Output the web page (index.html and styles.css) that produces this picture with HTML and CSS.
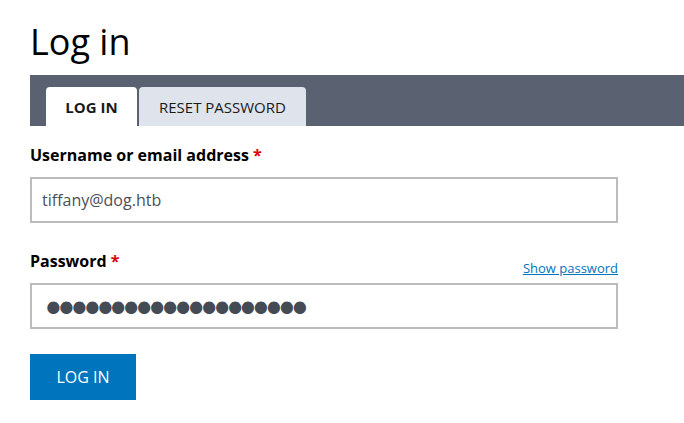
FILE: index.html
```html
<!DOCTYPE html>
<html>
<head>
<meta charset="utf-8">
<link rel="stylesheet" href="styles.css">
</head>
<body>
<main class="page">
  <h1 class="title">Log in</h1>
  <nav class="tabs">
    <a class="tab tab-active">LOG IN</a>
    <a class="tab">RESET PASSWORD</a>
  </nav>
  <form class="form">
    <div class="field">
      <label class="label">Username or email address <span class="req">*</span></label>
      <input class="input" type="text" value="tiffany@dog.htb">
    </div>
    <div class="field field-pass">
      <div class="label-row">
        <label class="label">Password <span class="req">*</span></label>
        <a class="show" href="#">Show password</a>
      </div>
      <input class="input input-pass" type="password" value="abcdefghijklmnopqrst">
    </div>
    <button class="btn" type="button">LOG IN</button>
  </form>
</main>
</body>
</html>
```

FILE: styles.css
```css
html, body {
  margin: 0;
  padding: 0;
  background: #fff;
}
body {
  font-family: "Open Sans", "Noto Sans", sans-serif;
  color: #000;
}
.page {
  padding: 16px 0 0 30px;
}
.title {
  margin: 0;
  font-size: 36px;
  font-weight: 400;
  line-height: 52px;
  height: 59px;
}
.tabs {
  display: flex;
  gap: 2px;
  background: #5a6271;
  height: 51px;
  padding: 12px 0 0 16px;
  box-sizing: border-box;
  align-items: flex-end;
}
.tab {
  display: flex;
  align-items: center;
  justify-content: center;
  height: 39px;
  padding: 0 20px;
  background: #dfe3ec;
  border-radius: 4px 4px 0 0;
  font-size: 15px;
  color: #1a1a1a;
  box-sizing: border-box;
}
.tab-active {
  background: #fff;
  font-weight: 700;
  width: 91px;
  padding: 0;
}
.form {
  width: 588px;
  padding-top: 17px;
}
.field {
  display: flex;
  flex-direction: column;
}
.label {
  font-size: 16px;
  font-weight: 700;
  line-height: 24px;
  margin-bottom: 10px;
}
.req {
  color: #e00000;
}
.input {
  height: 46px;
  box-sizing: border-box;
  border: 2px solid #bcbcbc;
  border-radius: 0;
  padding: 0 10px;
  font-family: "Open Sans", "Noto Sans", sans-serif;
  font-size: 16px;
  color: #4a4f59;
  outline: none;
}
.input-pass {
  font-family: "DejaVu Sans", sans-serif;
  font-size: 42px;
  color: #454b55;
  letter-spacing: -11.8px;
  padding: 6px 0 0 9px;
}
.field-pass {
  margin-top: 26px;
}
.label-row {
  display: flex;
  justify-content: space-between;
  align-items: flex-end;
}
.show {
  font-size: 13px;
  color: #0074bd;
  text-decoration: underline;
  margin-bottom: 6px;
  line-height: 18px;
}
.btn {
  margin-top: 25px;
  height: 46px;
  width: 106px;
  background: #0074bd;
  color: #fff;
  border: 0;
  border-radius: 0;
  font-family: "Open Sans", "Noto Sans", sans-serif;
  font-size: 16px;
  padding: 0;
}
```
